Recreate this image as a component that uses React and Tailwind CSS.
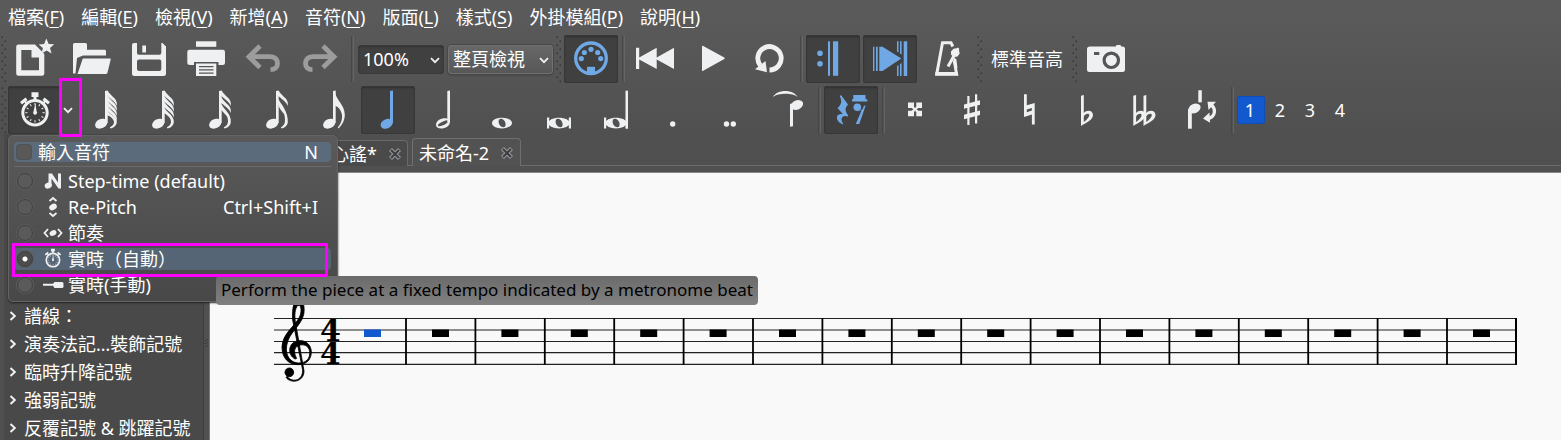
import React from "react";

const LIGHT = "#eff0f1";
const BLUE = "#70a8e6";

/* ---------- drawing helpers ---------- */

function Glyph({ children, color = LIGHT }) {
  return (
    <svg viewBox="0 0 54 48" className="h-[48px] w-[54px] shrink-0" fill={color} stroke="none" aria-hidden="true">
      {children}
    </svg>
  );
}

function ToolButton({ label, active, disabled, children, color }) {
  const c = color || (active ? BLUE : LIGHT);
  return (
    <button
      type="button"
      aria-label={label}
      aria-pressed={active ? true : undefined}
      disabled={disabled}
      className={
        active
          ? "h-[48px] w-[54px] shrink-0 rounded-[3px] bg-[#404040] shadow-[inset_0_0_0_1px_#373737,inset_0_2px_2px_#303030]"
          : "h-[48px] w-[54px] shrink-0 rounded-[3px]"
      }
    >
      <Glyph color={c}>{children}</Glyph>
    </button>
  );
}

function Separator() {
  return (
    <span className="flex w-1 shrink-0 justify-center gap-px self-stretch py-px">
      <span className="w-px bg-[#474747]" />
      <span className="w-px bg-[#656565]" />
    </span>
  );
}

function Grip() {
  return (
    <svg viewBox="0 0 6 46" className="h-[46px] w-[6px] shrink-0" aria-hidden="true">
      {Array.from({ length: 12 }, (_, i) => (
        <rect key={i} x={i % 2 ? 3.5 : 0.5} y={i * 4 + 0.5} width="1.5" height="1.5" fill="#353535" />
      ))}
    </svg>
  );
}

function Chevron({ className }) {
  return (
    <svg viewBox="0 0 10 7" className={className} fill="none" stroke={LIGHT} strokeWidth="1.8" aria-hidden="true">
      <path d="M1 1.2 5 5.2 9 1.2" />
    </svg>
  );
}

/* ---------- icons ---------- */

const NewIcon = () => (
  <>
    <path
      fillRule="evenodd"
      d="M10.500 9.500H27L36.300 19V38.500a2.300 2.300 0 0 1-2.300 2.300H10.500a2.300 2.300 0 0 1-2.300-2.300V11.800a2.300 2.300 0 0 1 2.300-2.300ZM13.300 15V35.300H31V22.500H23.500V15Z"
    />
    <path d="M38.300 3.500 40.700 9 46.200 9.300 42 13 43.600 18.500 38.600 15.500 33.600 18.500 34.900 13 30.700 9.500 36.200 9Z" />
  </>
);

const OpenIcon = () => (
  <>
    <path d="M8 9.500Q8 8 9.500 8H20.500Q22 8 22 9.500V14.800H39.500Q41 14.800 41 16.200V20.500H18L12 23 10.500 38.500H8Z" />
    <path d="M17.800 23.500H45Q46 23.500 45.700 24.500L42.400 38Q42 39 41 39H12.500Z" />
  </>
);

const SaveIcon = () => (
  <path
    fillRule="evenodd"
    d="M12 8H15V18Q15 19.800 16.800 19.800H37.500Q39.300 19.800 39.300 18V8H40.500L44 11.500V38.500Q44 41 41.500 41H12.500Q10 41 10 38.500V10.200Q10 8 12 8ZM17 24.500Q15 24.500 15 26.500V33.800Q15 36 17 36H37.300Q39.300 36 39.300 33.800V26.500Q39.300 24.500 37.300 24.500ZM20.300 10.500H24V17.500H20.300Z"
  />
);

const PrintIcon = () => (
  <>
    <rect x="17" y="6.300" width="20.300" height="5.500" />
    <path d="M10.500 14.800H44Q46 14.800 46 17V27.500Q46 30 43.500 30H39.500V27H15V30H11Q8.300 30 8.300 27.500V17Q8.300 14.800 10.500 14.800Z" />
    <path fillRule="evenodd" d="M17 28.500H37.300V41H17ZM20 31V32.300H34.500V31ZM20 34.300V35.600H34.500V34.300ZM20 37.500V38.800H34.500V37.500Z" />
  </>
);

const UndoIcon = () => (
  <path
    d="M24 11 13 21.700 24 32.500M13 21.700H33.500C39.500 21.700 41.500 25 41.500 28.500 41.500 32 39 34.700 34.500 34.700"
    fill="none"
    stroke="#9c9c9c"
    strokeWidth="4.800"
  />
);

const RedoIcon = () => (
  <g transform="translate(54 0) scale(-1 1)">
    <UndoIcon />
  </g>
);

const MidiIcon = () => (
  <>
    <circle cx="27" cy="23.300" r="15.300" fill="none" stroke={BLUE} strokeWidth="3.300" />
    {[
      [17.300, 23.600],
      [20.300, 17.500],
      [27, 14.300],
      [33.700, 17.500],
      [36.700, 23.600],
    ].map(([x, y]) => (
      <circle key={x} cx={x} cy={y} r="2.600" />
    ))}
    <rect x="23" y="31.800" width="8" height="7" />
  </>
);

const RewindIcon = () => (
  <path d="M8 12.700H11.200V22.500L28.700 12.700V22.500L46 12.700V34L28.700 24.500V34L11.200 24.500V34H8Z" />
);

const PlayIcon = () => (
  <path d="M17 11.500Q17 10.500 18.200 11L39.300 22.500Q40.300 23.300 39.300 24L18.200 35.800Q17 36.500 17 35.300Z" />
);

const LoopIcon = () => (
  <>
    <path d="M27.500 35A11.700 11.700 0 1 0 18.300 30.500" fill="none" stroke={LIGHT} strokeWidth="4.800" />
    <path d="M13 34.300 25 37.200 23.500 26Z" />
  </>
);

const RepeatIcon = () => (
  <>
    <circle cx="14" cy="18.300" r="2.800" />
    <circle cx="14" cy="28.700" r="2.800" />
    <rect x="22" y="6.300" width="2" height="34.500" />
    <rect x="27" y="6.300" width="5.200" height="34.500" />
  </>
);

const PanIcon = () => (
  <>
    <rect x="10" y="11.700" width="1.400" height="24.300" />
    <rect x="13" y="11.700" width="1.700" height="24.300" />
    <path d="M16.300 11.700H19.500L38.300 23.500 19.500 36H16.300Z" />
    <path d="M34 6.300H35.500V17.500L34 16.500ZM37 6.300H38.600V19.500L37 18.500ZM34 41H35.500V30L34 31ZM37 41H38.600V28L37 29Z" />
    <rect x="40.700" y="6.300" width="3.500" height="34.700" />
  </>
);

const MetronomeIcon = () => (
  <>
    <path d="M32.800 11.500 31 7.800H22.500L16.800 38.800H36.500L34.300 25.500" fill="none" stroke={LIGHT} strokeWidth="3" />
    <path d="M15.500 37H37.500L38.400 40.800H15Z" />
    <path d="M34.300 23 36.300 24 37.500 33 34.200 30.500 32.800 27Z" />
    <path d="M28 31.500 35 19" fill="none" stroke={LIGHT} strokeWidth="3" />
    <path d="M33.500 13.800 36.500 13.300 38 12.500 39.200 13.800 39 15.500 39.700 18.500 37.500 21.500 34 22 31 19.800 31 16.500Z" />
  </>
);

const CameraIcon = () => (
  <>
    <path
      fillRule="evenodd"
      d="M11 11.500H37V11Q37 10 38 10H41Q42 10 42 11V11.500H43.500Q46 11.500 46 14V34.500Q46 37 43.500 37H10.500Q8 37 8 34.500V14Q8 11.500 11 11.500ZM15 17V20H20.300V17Z"
    />
    <circle cx="32.300" cy="25.300" r="7.200" fill={LIGHT} stroke="#555" strokeWidth="3.200" />
  </>
);

function StopwatchShape({ color = LIGHT }) {
  return (
    <g fill={color}>
      <circle cx="27" cy="26.700" r="12.200" fill="none" stroke={color} strokeWidth="3" />
      <path d="M23.500 6.300H30.500V11H28.500V14H25.500V11H23.500Z" />
      <path d="M12 16 17.500 11.500 19.500 14 14 18.500ZM42 16 36.500 11.500 34.500 14 40 18.500Z" />
      <path d="M16.500 14.500 19.500 18.500M37.500 14.500 34.500 18.500" stroke={color} strokeWidth="2" />
      {Array.from({ length: 12 }, (_, i) => (
        <rect key={i} x="26.500" y="17" width="1" height="2.200" transform={`rotate(${i * 30} 27 26.700)`} />
      ))}
      <path d="M27.400 17 28.600 25.300A2 2 0 1 1 25.500 25.500Z" />
    </g>
  );
}

const Head = ({ x, y }) => <ellipse cx={x} cy={y} rx="6.400" ry="4.600" transform={`rotate(-25 ${x} ${y})`} />;

const FLAG_STEP = { 2: 9, 3: 7, 4: 5.8, 5: 5 };

function FlaggedNote({ flags }) {
  if (flags === 1) {
    return (
      <>
        <Head x={25.200} y={37.700} />
        <path d="M29 5 31.700 4.500V37H29Z" />
        <path d="M31 6C32 14 41 19 40.800 29 40.500 35 38 39 34.500 42.500L33.800 41.500C37.500 37 39 32 37.500 27 36 22 33 20.500 31 19.500Z" />
      </>
    );
  }
  const step = FLAG_STEP[flags];
  const last = 5 + (flags - 1) * step;
  const mid = (last + 36) / 2;
  return (
    <>
      <Head x={25.200} y={37.700} />
      <path d="M29 5 31.700 4.500V37H29Z" />
      {Array.from({ length: flags - 1 }, (_, i) => {
        const y = 5 + i * step;
        return (
          <path
            key={i}
            d={`M31 ${y}H32C33.500 ${y + 4} 40.500 ${y + 7} 40.800 ${y + 12}V${y + 15}C38.500 ${y + 9.500} 34 ${y + 8} 31 ${y + 4.500}Z`}
          />
        );
      })}
      <path
        d={`M31 ${last}H32C33.500 ${last + 4} 41.500 ${mid} 40.800 36.500 40.300 39.500 37.500 42.500 34 42.300V41.200C37.500 39.500 39 36.500 37.300 ${mid + 3.500} 36 ${mid + 1} 33 ${mid - 1} 31 ${last + 4.500}Z`}
      />
    </>
  );
}

const QuarterIcon = () => (
  <>
    <Head x={25.700} y={37.800} />
    <path d="M29 5 32 4.500V37H29Z" />
  </>
);

const HalfIcon = () => (
  <>
    <path
      fillRule="evenodd"
      d="M18 39C18 35 22.500 32.300 27 32.300 30 32.300 32 33.500 32 35.500 32 40 27.500 42.500 23.300 42.500 20 42.500 18 41.300 18 39ZM20 39.700C20.800 41.300 25 39.600 27.300 38.300 29.800 36.700 30.700 35.500 30 34.600 29 33.500 25.500 35 23 36.500 20.500 38 19.500 38.700 20 39.700Z"
    />
    <path d="M29.300 5 32 4.500V36H29.300Z" />
  </>
);

const WholePath =
  "M17 37C17 33.800 21.300 31.700 27 31.700S37 33.800 37 37 32.700 42.400 27 42.400 17 40.200 17 37ZM23.600 35.800C23.600 38.500 26 41.300 28.400 41.300 30 41.300 30.600 40 30.600 38.300 30.600 35.500 28.300 32.800 25.800 32.800 24.300 32.800 23.600 34 23.600 35.800Z";

const WholeIcon = () => <path fillRule="evenodd" d={WholePath} />;

const BreveIcon = () => (
  <>
    <path fillRule="evenodd" d={WholePath} />
    <path d="M15 31.500H17.200V42.500H15ZM36.800 31.500H39V42.500H36.800Z" />
    <path d="M17 35 20 33V41L17 39ZM37 35 34 33V41L37 39Z" />
  </>
);

const LongaIcon = () => (
  <>
    <BreveIcon />
    <path d="M36.500 4.700H39V42.500H36.500Z" />
  </>
);

const TieIcon = () => (
  <>
    <path d="M13 11C17 3 33.500 3 37.500 11 33 6.800 18 6.800 13 11Z" />
    <Head x={37} y={19} />
    <path d="M30 18 33 17V40.300L30 40.800Z" />
  </>
);

const RestsIcon = () => (
  <>
    <path d="M17 9 24 18.500C20.500 22.500 21 25 24.300 29.500L23.800 30.500C20 29 17.300 31 17.500 33.500 17.600 35.500 18.800 37 19.500 38.500 15.500 37.500 12.300 34 13 30.800 13.500 28.500 16 27.500 19 28.200L13.500 22C17.500 18.500 18.300 15.500 15.800 10Z" />
    <path d="M29.300 9H41.500V13.300H43.300V15.500H28V13.300H29.300Z" />
    <circle cx="33.300" cy="21.300" r="3.800" />
    <path d="M33.300 25.100C37 25.500 39 23.500 40 19.500L41.500 20 35.300 38H31.800L37.300 25Z" />
  </>
);

const DoubleSharpIcon = () => (
  <path d="M20 16.500H26V20.500L27 22.300 28.300 20.500V16.500H34V22H30.500L28.500 23.300 30.500 24.700H34V30.300H28.300V26.300L27 24.500 26 26.300V30.300H20V24.700H23.500L25.500 23.300 23.500 22H20Z" />
);

const SharpIcon = () => (
  <>
    <path d="M22.300 10H24.500V39H22.300ZM30 8.300H32.200V37.500H30Z" />
    <path d="M19 18.500 35 14.300V18.700L19 22.800ZM19 28.800 35 24.600V29L19 33.200Z" />
  </>
);

const NaturalIcon = () => (
  <path
    fillRule="evenodd"
    d="M22 8.300H24.800V19.300L32.700 17V38.500H29.900V28.500L22 31ZM24.800 23.500V26.300L29.900 24.500V21.900Z"
  />
);

const FLAT =
  "M0 .7 2.800 0V18C5.500 14.500 12 15 12 20 12 25 4.500 28 0 31ZM2.800 21.500V27C6 24.500 8.500 22 8.300 20 8 17.800 4 18.500 2.800 21.500Z";
const FlatIcon = () => <path fillRule="evenodd" transform="translate(22 9)" d={FLAT} />;
const DoubleFlatIcon = () => (
  <>
    <path fillRule="evenodd" transform="translate(17.300 9)" d={FLAT} />
    <path fillRule="evenodd" transform="translate(27.500 9)" d={FLAT} />
  </>
);

const FlipIcon = () => (
  <>
    <rect x="25.300" y="4.300" width="3.500" height="12" />
    <Head x={21.500} y={22.500} />
    <path d="M15 23H18.800V42.700H15Z" />
    <path d="M38.500 19C43 23 42.500 30 36 32.500" fill="none" stroke={LIGHT} strokeWidth="3.200" />
    <path d="M34.500 15.800H43L35.500 24ZM30 32.500 36.500 26.500 37 36.700Z" />
  </>
);

/* ---------- bars ---------- */

const MENUS = [
  ["檔案", "F"],
  ["編輯", "E"],
  ["檢視", "V"],
  ["新增", "A"],
  ["音符", "N"],
  ["版面", "L"],
  ["樣式", "S"],
  ["外掛模組", "P"],
  ["說明", "H"],
];

function MenuBar() {
  return (
    <nav className="flex h-[35px] items-center gap-[17px] px-2 pb-[2px]">
      {MENUS.map(([name, key]) => (
        <button key={key} type="button" className="whitespace-nowrap">
          {name}(<span className="underline decoration-1 underline-offset-[3px] [text-decoration-skip-ink:none]">{key}</span>)
        </button>
      ))}
    </nav>
  );
}

function ComboBox({ label, value, className }) {
  return (
    <div className={className}>
      <select aria-label={label} defaultValue={value} className="h-full w-full appearance-none bg-transparent pl-[5px] outline-none">
        <option>{value}</option>
      </select>
      <Chevron className="pointer-events-none absolute top-3 right-1 h-[7px] w-[10px]" />
    </div>
  );
}

function MainToolbar() {
  return (
    <div className="flex h-[48px] items-center">
      <div className="flex w-2 justify-center">
        <Grip />
      </div>
      <div className="flex items-center gap-[3px]">
        <ToolButton label="New"><NewIcon /></ToolButton>
        <ToolButton label="Open"><OpenIcon /></ToolButton>
        <ToolButton label="Save"><SaveIcon /></ToolButton>
        <ToolButton label="Print"><PrintIcon /></ToolButton>
        <ToolButton label="Undo" disabled><UndoIcon /></ToolButton>
        <ToolButton label="Redo" disabled><RedoIcon /></ToolButton>
        <Separator />
      </div>
      <ComboBox
        label="Zoom"
        value="100%"
        className="relative ml-1 h-[29px] w-[86px] rounded-[4px] bg-[#404040] shadow-[inset_0_0_0_1px_#393939,inset_0_2px_2px_#333]"
      />
      <ComboBox
        label="View mode"
        value="整頁檢視"
        className="relative ml-1 h-[29px] w-[105px] rounded-[4px] bg-linear-to-b from-[#686868] to-[#575757] shadow-[inset_0_0_0_1px_#707070,0_0_0_1px_#484848,0_1px_2px_#333]"
      />
      <div className="flex w-[11px] justify-center">
        <Grip />
      </div>
      <div className="flex items-center gap-[3px]">
        <ToolButton label="MIDI input" active><MidiIcon /></ToolButton>
        <Separator />
        <ToolButton label="Rewind"><RewindIcon /></ToolButton>
        <ToolButton label="Play"><PlayIcon /></ToolButton>
        <ToolButton label="Loop"><LoopIcon /></ToolButton>
        <Separator />
        <ToolButton label="Play repeats" active><RepeatIcon /></ToolButton>
        <ToolButton label="Pan score" active><PanIcon /></ToolButton>
        <ToolButton label="Metronome"><MetronomeIcon /></ToolButton>
        <Grip />
      </div>
      <button type="button" className="mx-2 whitespace-nowrap">標準音高</button>
      <div className="flex w-2 justify-center">
        <Grip />
      </div>
      <ToolButton label="Image capture"><CameraIcon /></ToolButton>
    </div>
  );
}

function NoteToolbar() {
  return (
    <div className="mt-[3px] flex h-[48px] items-center">
      <div className="flex w-2 justify-center">
        <Grip />
      </div>
      <div className="flex items-center gap-[3px]">
        <div className="flex w-[65px] items-center">
          <button
            type="button"
            aria-label="Note input"
            className="h-[48px] w-[54px] shrink-0 rounded-[3px] bg-[#404040] shadow-[inset_0_0_0_1px_#373737,inset_0_2px_2px_#303030]"
          >
            <Glyph><StopwatchShape /></Glyph>
          </button>
          <button type="button" aria-label="Note input mode" className="flex h-[48px] w-[11px] shrink-0 items-center justify-center">
            <Chevron className="h-[7px] w-[10px] shrink-0" />
          </button>
        </div>
        <ToolButton label="128th"><FlaggedNote flags={5} /></ToolButton>
        <ToolButton label="64th"><FlaggedNote flags={4} /></ToolButton>
        <ToolButton label="32nd"><FlaggedNote flags={3} /></ToolButton>
        <ToolButton label="16th"><FlaggedNote flags={2} /></ToolButton>
        <ToolButton label="8th"><FlaggedNote flags={1} /></ToolButton>
        <ToolButton label="Quarter" active><QuarterIcon /></ToolButton>
        <ToolButton label="Half"><HalfIcon /></ToolButton>
        <ToolButton label="Whole"><WholeIcon /></ToolButton>
        <ToolButton label="Breve"><BreveIcon /></ToolButton>
        <ToolButton label="Longa"><LongaIcon /></ToolButton>
        <ToolButton label="Dot"><circle cx="26.700" cy="38" r="2.700" /></ToolButton>
        <ToolButton label="Double dot">
          <circle cx="23.500" cy="38" r="2.700" />
          <circle cx="30.300" cy="38" r="2.700" />
        </ToolButton>
        <ToolButton label="Tie"><TieIcon /></ToolButton>
        <Separator />
        <ToolButton label="Rest" active><RestsIcon /></ToolButton>
        <Separator />
        <ToolButton label="Double sharp"><DoubleSharpIcon /></ToolButton>
        <ToolButton label="Sharp"><SharpIcon /></ToolButton>
        <ToolButton label="Natural"><NaturalIcon /></ToolButton>
        <ToolButton label="Flat"><FlatIcon /></ToolButton>
        <ToolButton label="Double flat"><DoubleFlatIcon /></ToolButton>
        <ToolButton label="Flip stem"><FlipIcon /></ToolButton>
        <Separator />
      </div>
      <div className="ml-[3px] flex gap-[2px]">
        <button type="button" aria-pressed="true" className="h-7 w-7 rounded-[3px] bg-[#1259d0] pr-[2px] pb-px shadow-[inset_0_0_0_1px_#0f4db6]">1</button>
        <button type="button" className="h-7 w-7 pr-[2px] pb-px">2</button>
        <button type="button" className="h-7 w-7 pr-[2px] pb-px">3</button>
        <button type="button" className="h-7 w-7 pr-[2px] pb-px">4</button>
      </div>
    </div>
  );
}

/* ---------- drop-down menu ---------- */

function ModeIcon({ kind }) {
  return (
    <svg viewBox="0 0 22 22" className="h-[22px] w-[22px] shrink-0" fill={LIGHT} aria-hidden="true">
      {kind === "step" && (
        <>
          <path d="M6.500 3.500H10L16 12.500V3.500H19V18.500H16.500L9.500 8.500V15H6.500Z" />
          <ellipse cx="6.300" cy="15.500" rx="3.700" ry="2.900" transform="rotate(-20 6.300 15.500)" />
        </>
      )}
      {kind === "pitch" && (
        <>
          <path d="M7.500 5 11 2 14.500 5M7.500 17 11 20 14.500 17" fill="none" stroke={LIGHT} strokeWidth="1.800" />
          <ellipse cx="11" cy="11" rx="4" ry="3" transform="rotate(-30 11 11)" />
        </>
      )}
      {kind === "rhythm" && (
        <>
          <path d="M6 7 2.500 11 6 15M16 7 19.500 11 16 15" fill="none" stroke={LIGHT} strokeWidth="1.800" />
          <ellipse cx="11" cy="11" rx="3.600" ry="2.700" transform="rotate(-30 11 11)" />
        </>
      )}
      {kind === "auto" && (
        <g transform="translate(-3.900 -2.600) scale(.55)">
          <StopwatchShape />
        </g>
      )}
      {kind === "manual" && <path d="M1 9.800H11L12.500 8H20Q21.500 8 21.500 9.500V12.500Q21.500 14 20 14H12.500L11 11.800H1Z" />}
    </svg>
  );
}

const MODES = [
  { kind: "step", label: "Step-time (default)" },
  { kind: "pitch", label: "Re-Pitch", shortcut: "Ctrl+Shift+I" },
  { kind: "rhythm", label: "節奏" },
  { kind: "auto", label: "實時（自動）", checked: true },
  { kind: "manual", label: "實時(手動)" },
];

function ModeMenu() {
  return (
    <div className="absolute top-[135px] left-2 z-10 w-[330px] rounded-[5px] border border-[#646464] bg-linear-to-b from-[#5a5a5a] to-[#484848] pt-1.5 pr-1.5 pb-[3px] pl-[5px] shadow-[0_1px_2px_#222]">
      <label className="flex h-5 items-center rounded-[4px] bg-[#5b6b7c] pr-[13px] pl-[3px]">
        <input type="checkbox" className="h-3.5 w-3.5 shrink-0 appearance-none rounded-[3px] bg-[#585858] shadow-[0_0_0_1px_#4e5359]" />
        <span className="ml-[7px] flex-1">輸入音符</span>
        <span>N</span>
      </label>
      <hr className="mt-1 border-[#6a6a6a]" />
      <div className="mt-px flex flex-col">
        {MODES.map((m) => (
          <label
            key={m.kind}
            className={
              m.checked
                ? "my-[2px] flex h-[22px] items-center rounded-[4px] bg-[#556575] pr-[13px] pl-[3px]"
                : "flex h-[26px] items-center pr-[13px] pl-[3px]"
            }
          >
            <input
              type="radio"
              name="mode"
              defaultChecked={m.checked}
              className="h-4 w-4 shrink-0 appearance-none rounded-full border border-[#404040] bg-[#5a5a5a] shadow-[0_0_0_1px_#5c5c5c] checked:bg-[radial-gradient(circle,#fff_0_2px,#4c4c4c_3px)]"
            />
            <span className="ml-[9px] flex">
              <ModeIcon kind={m.kind} />
            </span>
            <span className="ml-1 flex-1">{m.label}</span>
            {m.shortcut && <span>{m.shortcut}</span>}
          </label>
        ))}
      </div>
    </div>
  );
}

/* ---------- sidebar, tabs and score ---------- */

const PALETTES = ["譜線：", "演奏法記…裝飾記號", "臨時升降記號", "強弱記號", "反覆記號 & 跳躍記號"];

function Sidebar() {
  return (
    <aside className="flex w-[210px] shrink-0 border-l-4 border-[#505050] bg-[#494949] pt-[168px]">
      <ul className="flex-1">
        {PALETTES.map((p) => (
          <li key={p}>
            <button type="button" className="flex h-7 items-center gap-[7px] pl-[5px] whitespace-nowrap">
              <svg viewBox="0 0 8 10" className="h-[10px] w-[8px]" fill="none" stroke={LIGHT} strokeWidth="2" aria-hidden="true">
                <path d="M1.500 1 5.800 5 1.500 9" />
              </svg>
              {p}
            </button>
          </li>
        ))}
      </ul>
      <div className="w-[7px] shrink-0 border-r border-l border-r-[#777] border-l-[#3e3e3e] bg-[#505050] pt-[37px] pl-px">
        <svg viewBox="0 0 4 10" className="h-[10px] w-[4px]" fill="#333" aria-hidden="true">
          <path d="M0 1h1v1H0zM2 0h1v1H2zM0 4h1v1H0zM2 3h1v1H2zM0 7h1v1H0zM2 6h1v1H2z" />
        </svg>
      </div>
    </aside>
  );
}

function CloseMark() {
  return (
    <svg viewBox="0 0 12 12" className="h-3 w-3" aria-hidden="true">
      <path d="M1.500 1.500 10.500 10.500M10.500 1.500 1.500 10.500" stroke="#9a9a9a" strokeWidth="4.200" />
      <path d="M2 2 10 10M10 2 2 10" stroke="#3b3f44" strokeWidth="2.200" />
    </svg>
  );
}

function Tabs() {
  return (
    <div className="flex h-9 items-end border-b-[6px] border-[#505050] pl-[102px] shadow-[inset_0_-1px_0_#6c6c6c]">
      <div className="mr-1 flex h-[26px] w-[96px] items-center justify-between rounded-t-[4px] border border-b-0 border-[#6a6a6a] bg-[#4a4a4a] pr-[6px] pl-[18px]">
        <button type="button">心謠*</button>
        <button type="button" aria-label="Close 心謠"><CloseMark /></button>
      </div>
      <div className="flex h-[28px] w-[109px] items-center justify-between rounded-t-[4px] border border-b-0 border-[#707070] bg-[#525252] pr-[7px] pl-[6px]">
        <button type="button">未命名-2</button>
        <button type="button" aria-label="Close 未命名-2"><CloseMark /></button>
      </div>
    </div>
  );
}

function Score() {
  const lines = [18.500, 30, 41.500, 52.700, 64.300];
  return (
    <svg viewBox="0 0 1260 110" className="mt-[127px] ml-[60px] block h-[110px] w-[1260px]" role="img" aria-label="Score">
      {lines.map((y) => (
        <path key={y} d={`M4 ${y}H1247`} stroke="#222" strokeWidth="1.200" />
      ))}
      <g transform="translate(-10 -10) scale(.3333)" stroke="#000" strokeWidth="2.500">
        <circle cx="88" cy="247" r="13" />
        <path d="M82 259C92 278 129 275 128 240L98 90C95 55 104 20 117 20 127 22 136 50 131 74 122 110 85 128 80 167 75 200 94 219 116 219 140 219 151 205 149 184 146 168 134 163 121 165 105 168 98 183 109 203 112 207 105 208 102 205 80 190 87 154 117 152 139 150 154 166 154 187 153 211 138 224 114 224 86 224 66 205 66 171 68 130 103 111 118 82 125 68 125 47 117 46 107 46 102 70 106 95L132 243C132 278 90 281 78 262Z" />
      </g>
      <text x="50" y="41" className="font-['DejaVu_Serif',serif] text-[30px] font-bold">4</text>
      <text x="50" y="64" className="font-['DejaVu_Serif',serif] text-[30px] font-bold">4</text>
      <rect x="94" y="29.500" width="17" height="7.500" fill="#1259d0" />
      {Array.from({ length: 16 }, (_, i) => (
        <g key={i}>
          <path d={`M${136 + i * 69.400} 18V64.500`} stroke="#000" strokeWidth="1.800" />
          <rect x={162 + i * 69.400} y="29.500" width="17" height="7.500" />
        </g>
      ))}
      <path d="M1246 18V64.500" stroke="#000" strokeWidth="2" />
    </svg>
  );
}

export default function App() {
  return (
    <div className="relative flex min-h-screen flex-col overflow-hidden bg-[#505050] font-['Noto_Sans','Noto_Sans_CJK_TC',sans-serif] text-[18px] leading-6 text-white">
      <header className="bg-linear-to-b from-[#5b5b5b] to-[#505050]">
        <MenuBar />
        <MainToolbar />
        <NoteToolbar />
      </header>
      <div className="flex flex-1">
        <Sidebar />
        <main className="flex min-w-0 flex-1 flex-col">
          <div className="pt-[2px]">
            <Tabs />
          </div>
          <div className="flex-1 overflow-hidden border-t border-[#888] bg-[#f9f9f9]">
            <Score />
          </div>
        </main>
      </div>
      <ModeMenu />
      <div
        role="tooltip"
        className="absolute top-[276px] left-[216px] z-20 rounded-[4px] bg-linear-to-b from-[#6b6b6b] to-[#808080] px-[5px] pt-[2px] pb-[3px] text-[17px] whitespace-nowrap text-black"
      >
        Perform the piece at a fixed tempo indicated by a metronome beat
      </div>
      <div className="pointer-events-none absolute top-[78px] left-[59px] z-30 h-[59px] w-[23px] border-3 border-[#ff00ff]" />
      <div className="pointer-events-none absolute top-[243px] left-[12px] z-30 h-[34px] w-[316px] border-3 border-[#ff00ff]" />
    </div>
  );
}
